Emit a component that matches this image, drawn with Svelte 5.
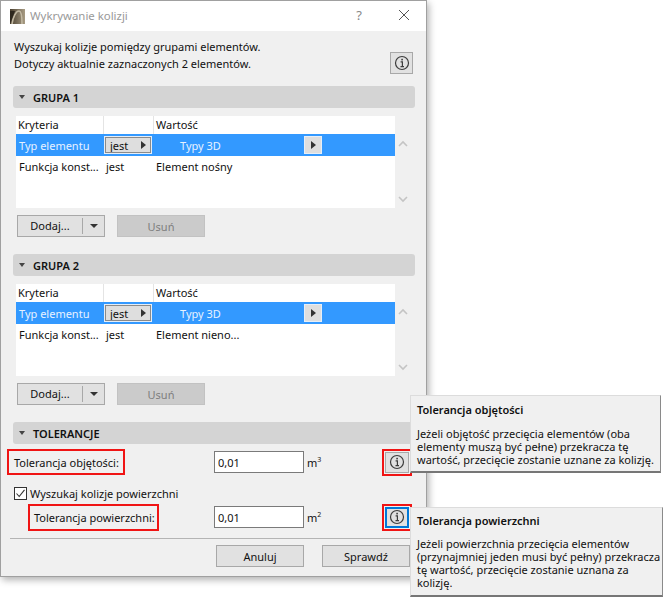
<script>
    const groups = [
        { title: 'GRUPA 1', value: 'Element nośny' },
        { title: 'GRUPA 2', value: 'Element nieno...' },
    ];
</script>

{#snippet infoIcon()}
    <svg width="16" height="16" viewBox="0 0 16 16" fill="none">
        <circle cx="8" cy="8" r="6.5" stroke="#3c3c3c" stroke-width="1.2" />
        <rect x="7.3" y="3.8" width="1.6" height="1.6" fill="#3c3c3c" />
        <path d="M6.6 6.9H8.4V11.2M6.5 11.6H10" stroke="#3c3c3c" stroke-width="1.2" />
    </svg>
{/snippet}

{#snippet header(title)}
    <div class="section-head">
        <span class="caret"></span>
        <span>{title}</span>
    </div>
{/snippet}

<div class="page">
    <div class="dialog">
        <div class="titlebar">
            <svg class="app-icon" width="15" height="15" viewBox="0 0 15 15">
                <defs>
                    <linearGradient id="logo" x1="0" y1="0" x2="1" y2="0">
                        <stop offset="0" stop-color="#4a4030" />
                        <stop offset="1" stop-color="#a89c84" />
                    </linearGradient>
                </defs>
                <rect width="15" height="15" fill="url(#logo)" />
                <path d="M2 15C3 8 6 2 9 2C11 2 12 8 12 15" fill="none" stroke="#c2b9a3" stroke-width="1.6" />
                <path d="M0 15L5 2H0Z" fill="#2e281e" />
            </svg>
            <span class="title">Wykrywanie kolizji</span>
            <span class="help">?</span>
            <svg class="close" width="12" height="12" viewBox="0 0 12 12">
                <path d="M1 1L11 11M11 1L1 11" stroke="#555" stroke-width="1" fill="none" />
            </svg>
        </div>

        <div class="body">
            <div class="intro">
                <div class="intro-text">
                    <div>Wyszukaj kolizje pomiędzy grupami elementów.</div>
                    <div>Dotyczy aktualnie zaznaczonych 2 elementów.</div>
                </div>
                <button class="info intro-info">{@render infoIcon()}</button>
            </div>

            {#each groups as group}
                <section class="group">
                    {@render header(group.title)}
                    <div class="list-wrap">
                        <div class="list">
                            <div class="row head">
                                <span class="c1 head-cell">Kryteria</span>
                                <span class="c2"></span>
                                <span class="c3 head-cell">Wartość</span>
                            </div>
                            <div class="row selected">
                                <span class="c1">Typ elementu</span>
                                <span class="pick">jest<i class="tri"></i></span>
                                <span class="typy">Typy 3D</span>
                                <span class="pick-small"><i class="tri"></i></span>
                            </div>
                            <div class="row plain">
                                <span class="c1">Funkcja konst...</span>
                                <span class="c2">jest</span>
                                <span class="c3">{group.value}</span>
                            </div>
                        </div>
                        <div class="scroll">
                            <svg width="10" height="7" viewBox="0 0 10 7"><path d="M1 6L5 2L9 6" fill="none" stroke="#c4c4c4" stroke-width="1.6" /></svg>
                            <svg width="10" height="7" viewBox="0 0 10 7"><path d="M1 1L5 5L9 1" fill="none" stroke="#c4c4c4" stroke-width="1.6" /></svg>
                        </div>
                    </div>
                    <div class="actions">
                        <div class="btn split">
                            <span class="split-label">Dodaj...</span>
                            <span class="split-arrow"></span>
                        </div>
                        <div class="btn disabled">Usuń</div>
                    </div>
                </section>
            {/each}

            <section class="tolerances">
                {@render header('TOLERANCJE')}
                <div class="field first">
                    <span class="marked label-vol">Tolerancja objętości:</span>
                    <input class="input" value="0,01" />
                    <span class="unit">m<sup>3</sup></span>
                    <span class="marked icon-mark"><button class="info">{@render infoIcon()}</button></span>
                </div>
                <label class="check">
                    <svg width="13" height="13" viewBox="0 0 13 13">
                        <rect x="0.5" y="0.5" width="12" height="12" fill="#fff" stroke="#333" />
                        <path d="M2.5 6.5L5.2 9.5L10.5 2.8" fill="none" stroke="#333" stroke-width="1.1" />
                    </svg>
                    Wyszukaj kolizje powierzchni
                </label>
                <div class="field second">
                    <span class="marked label-area">Tolerancja powierzchni:</span>
                    <input class="input" value="0,01" />
                    <span class="unit">m<sup>2</sup></span>
                    <span class="marked icon-mark"><button class="info focused">{@render infoIcon()}</button></span>
                </div>
            </section>

            <div class="footer">
                <div class="btn">Anuluj</div>
                <div class="btn">Sprawdź</div>
            </div>
        </div>
    </div>

    <div class="callout callout-vol">
        <h4>Tolerancja objętości</h4>
        <p>Jeżeli objętość przecięcia elementów (oba<br />elementy muszą być pełne) przekracza tę<br />wartość, przecięcie zostanie uznane za kolizję.</p>
    </div>
    <div class="callout callout-area">
        <h4>Tolerancja powierzchni</h4>
        <p>Jeżeli powierzchnia przecięcia elementów<br />(przynajmniej jeden musi być pełny) przekracza<br />tę wartość, przecięcie zostanie uznana za<br />kolizję.</p>
    </div>
</div>

<style>
    :global(body) {
        background: #fff;
    }
    .page {
        position: relative;
        width: 663px;
        height: 597px;
        overflow: hidden;
        background: #fff;
        font-family: "Noto Sans", "Open Sans", sans-serif;
        font-size: 11px;
        color: #111;
    }
    .dialog {
        width: 427px;
        height: 577px;
        box-sizing: border-box;
        border: 1px solid #a0a0a0;
        background: #f0f0f0;
        box-shadow: 2px 3px 7px rgba(0, 0, 0, 0.3);
    }
    .titlebar {
        height: 30px;
        background: #fff;
        display: flex;
        align-items: center;
        padding-left: 9px;
    }
    .app-icon {
        margin-right: 5px;
    }
    .title {
        font-size: 11.4px;
        color: #999;
        flex: 1;
        margin-bottom: 2px;
    }
    .help {
        color: #888;
        font-size: 13px;
        margin-right: 36px;
        margin-bottom: 2px;
    }
    .close {
        margin-right: 16px;
        margin-bottom: 2px;
    }
    .body {
        padding: 0 11px 0 12px;
    }
    .intro {
        height: 55px;
        display: flex;
    }
    .intro-text {
        padding: 7px 0 0 1px;
        line-height: 17px;
    }
    .intro-info {
        margin: 21px 2px 0 auto;
    }
    .info {
        width: 23px;
        height: 22px;
        padding: 0;
        box-sizing: border-box;
        border: 1px solid #a8a8a8;
        background: #e1e1e1;
        display: flex;
        align-items: center;
        justify-content: center;
    }
    .info.focused {
        border: 2px solid #0078d7;
        background: #e1e1e1;
    }
    .section-head {
        height: 22px;
        background: #d4d4d4;
        border-radius: 3px;
        display: flex;
        align-items: center;
        font-weight: 600;
        font-size: 11px;
        width: 402px;
    }
    .caret {
        width: 0;
        height: 0;
        border-left: 3.5px solid transparent;
        border-right: 3.5px solid transparent;
        border-top: 4px solid #444;
        margin: 0 8px 0 6px;
    }
    .group {
        height: 168px;
    }
    .list-wrap {
        display: flex;
        margin-top: 8px;
        margin-left: 3px;
    }
    .list {
        width: 379px;
        height: 92px;
        background: #fff;
    }
    .scroll {
        height: 92px;
        padding: 24px 0 0 3px;
        box-sizing: border-box;
        display: flex;
        flex-direction: column;
        gap: 49px;
    }
    .row {
        display: flex;
        align-items: center;
    }
    .row.head {
        height: 18px;
    }
    .head-cell {
        height: 18px;
        line-height: 18px;
    }
    .row.head .c1 {
        padding-left: 2px;
        width: 85px;
        flex: none;
        border-right: 1px solid #e4e4e4;
    }
    .row.head .c2 {
        width: 49px;
        height: 18px;
        flex: none;
        border-right: 1px solid #e4e4e4;
    }
    .row.head .c3 {
        padding-left: 2px;
    }
    .row.selected {
        height: 22px;
        background: #3399ff;
        color: #fff;
    }
    .row.selected .c1 {
        width: 85px;
        padding-left: 3px;
        flex: none;
        color: #e8f2ff;
    }
    .pick {
        width: 48px;
        height: 18px;
        box-sizing: border-box;
        border: 1px solid #e6eef7;
        outline: 1px solid #8a8a8a;
        outline-offset: -2px;
        background: #dedede;
        color: #111;
        display: flex;
        align-items: center;
        justify-content: space-between;
        padding: 0 5px;
    }
    .tri {
        width: 0;
        height: 0;
        border-top: 4px solid transparent;
        border-bottom: 4px solid transparent;
        border-left: 5px solid #333;
    }
    .typy {
        margin-left: 28px;
        width: 124px;
        flex: none;
        color: #e8f2ff;
    }
    .pick-small {
        width: 18px;
        height: 18px;
        box-sizing: border-box;
        border: 1px solid #e6eef7;
        background: #dedede;
        display: flex;
        align-items: center;
        justify-content: center;
    }
    .row.plain {
        height: 20px;
    }
    .row.plain .c1 {
        width: 85px;
        padding-left: 3px;
        flex: none;
    }
    .row.plain .c2 {
        width: 50px;
        padding-left: 2px;
        flex: none;
    }
    .actions {
        display: flex;
        gap: 12px;
        margin: 7px 0 0 4px;
    }
    .btn {
        width: 88px;
        height: 22px;
        box-sizing: border-box;
        border: 1px solid #a8a8a8;
        background: #e1e1e1;
        display: flex;
        align-items: center;
        justify-content: center;
    }
    .btn.disabled {
        background: #cbcbcb;
        border-color: #c2c2c2;
        color: #7e7e7e;
    }
    .split {
        justify-content: flex-start;
    }
    .split-label {
        width: 65px;
        text-align: center;
        border-right: 1px solid #a8a8a8;
        box-sizing: border-box;
        height: 16px;
        line-height: 16px;
    }
    .split-arrow {
        width: 0;
        height: 0;
        border-left: 4px solid transparent;
        border-right: 4px solid transparent;
        border-top: 4px solid #333;
        margin-left: 7px;
    }
    .tolerances {
        height: 116px;
    }
    .field {
        display: flex;
        align-items: center;
        height: 26px;
    }
    .field.first {
        margin-top: 5px;
    }
    .field.second {
        margin-top: 2px;
    }
    .marked {
        outline: 2px solid #f01414;
        outline-offset: -2px;
        box-sizing: border-box;
        display: flex;
        align-items: center;
        flex: none;
    }
    .label-vol {
        width: 118px;
        height: 26px;
        margin-left: -6px;
        padding-left: 7px;
    }
    .label-area {
        width: 131px;
        height: 27px;
        margin-left: 15px;
        padding-left: 6px;
    }
    .input {
        width: 90px;
        height: 22px;
        box-sizing: border-box;
        border: 1px solid #7a7a7a;
        padding: 0 3px;
        font: inherit;
        color: #111;
        background: #fff;
        flex: none;
    }
    .first .input {
        margin-left: 89px;
    }
    .second .input {
        margin-left: 55px;
    }
    .unit {
        margin-left: 3px;
        width: 75px;
        flex: none;
    }
    .unit sup {
        font-size: 7px;
        line-height: 0;
    }
    .icon-mark {
        width: 30px;
        height: 27px;
        justify-content: center;
    }
    .icon-mark .info {
        width: 24px;
        height: 21px;
    }
    .check {
        display: flex;
        align-items: center;
        gap: 3px;
        height: 17px;
        margin: 10px 0 0 1px;
    }
    .footer {
        border-top: 1px solid #b4b4b4;
        margin-left: -3px;
        width: 406px;
        padding: 6px 6px 0 0;
        display: flex;
        justify-content: flex-end;
        gap: 18px;
        box-sizing: border-box;
    }
    .callout {
        position: absolute;
        box-sizing: border-box;
        background: #f0f0f0;
        border: 1px solid #dcdcdc;
        border-right-color: #8a8a8a;
        border-bottom: 2px solid #767676;
        padding: 6px 0 0 6px;
        line-height: 13px;
        white-space: nowrap;
    }
    .callout h4 {
        margin: 0 0 10px;
        font-size: 11px;
        font-weight: 600;
        line-height: 15px;
    }
    .callout p {
        margin: 0;
    }
    .callout-vol {
        left: 410px;
        top: 395px;
        width: 251px;
        height: 78px;
    }
    .callout-area {
        left: 410px;
        top: 507px;
        width: 253px;
        height: 90px;
        padding-top: 5px;
    }
    .callout-area h4 {
        margin-bottom: 9px;
    }
</style>
